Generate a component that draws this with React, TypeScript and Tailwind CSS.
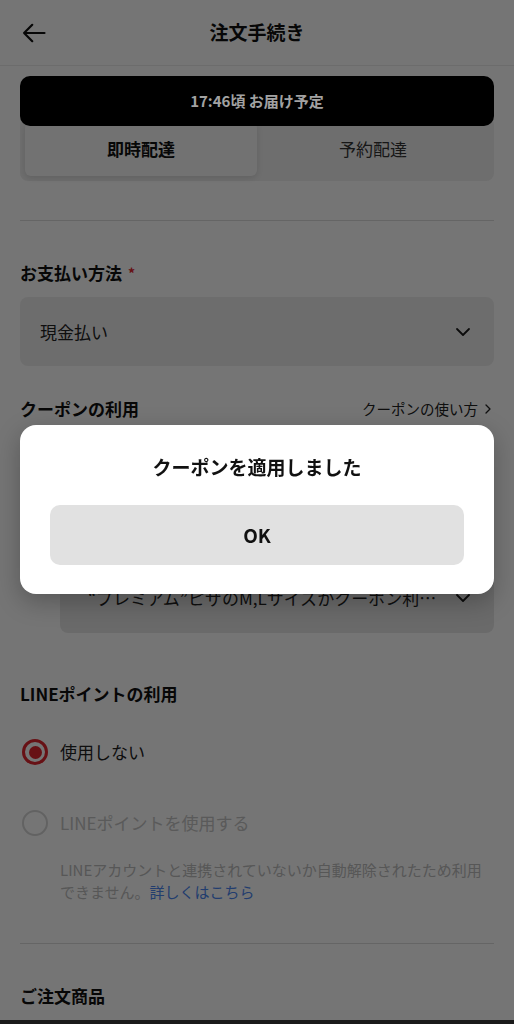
import React from 'react'

const FONT = { fontFamily: '"Noto Sans CJK JP", "Noto Sans", sans-serif' }

function ChevronDown() {
  return (
    <svg width="18" height="18" viewBox="0 0 24 24" fill="none" stroke="#1a1a1a" strokeWidth="2.4" strokeLinecap="round" strokeLinejoin="round">
      <path d="M4 8l8 8 8-8" />
    </svg>
  )
}

function Radio({ checked, disabled }: { checked?: boolean; disabled?: boolean }) {
  if (checked) {
    return (
      <span className="flex h-[26px] w-[26px] shrink-0 items-center justify-center rounded-full border-[3px] border-[#e0262f] bg-white">
        <span className="h-[13px] w-[13px] rounded-full bg-[#e0262f]" />
      </span>
    )
  }
  return (
    <span className={`h-[26px] w-[26px] shrink-0 rounded-full border-2 ${disabled ? 'border-[#d6d6d6]' : 'border-[#9a9a9a]'} bg-white`} />
  )
}

function SectionTitle({ children }: { children: React.ReactNode }) {
  return <p className="text-[17px] font-bold leading-6 text-[#111]">{children}</p>
}

export default function App() {
  return (
    <div className="relative min-h-[1024px] overflow-hidden bg-white text-[#111]" style={FONT}>
      {/* header */}
      <div className="flex h-[66px] items-center border-b border-[#ececec] px-[20px]">
        <svg width="28" height="28" viewBox="0 0 24 24" fill="none" stroke="#111" strokeWidth="1.9" strokeLinecap="round" strokeLinejoin="round">
          <path d="M21 12H3.5M10.5 5l-7 7 7 7" />
        </svg>
        <p className="flex-1 pr-[28px] text-center text-[19px] font-bold">注文手続き</p>
      </div>

      <div className="px-5">
        {/* delivery type */}
        <div className="mt-[51px] flex rounded-lg bg-[#efefef] p-[5px]">
          <div className="flex h-[54px] flex-1 items-center justify-center rounded-md bg-[#f9f9f9] text-[17px] font-bold shadow-[0_2px_6px_rgba(0,0,0,0.12)]">即時配達</div>
          <div className="flex h-[54px] flex-1 items-center justify-center text-[17px] text-[#333]">予約配達</div>
        </div>

        <div className="mt-[39px] border-t border-[#dcdcdc]" />

        {/* payment */}
        <div className="mt-10 flex items-center gap-1.5">
          <SectionTitle>お支払い方法</SectionTitle>
          <span className="text-[14px] font-bold text-[#e0262f]">*</span>
        </div>
        <div className="mt-3 flex h-[69px] items-center justify-between rounded-lg bg-[#eeeeee] pl-5 pr-[22px]">
          <span className="text-[17px] text-[#222]">現金払い</span>
          <ChevronDown />
        </div>

        {/* coupon */}
        <div className="mt-[31px] flex items-center justify-between">
          <SectionTitle>クーポンの利用</SectionTitle>
          <span className="flex items-center gap-1 text-[14.5px] text-[#222]">
            クーポンの使い方
            <svg width="12" height="12" viewBox="0 0 24 24" fill="none" stroke="#222" strokeWidth="2.6" strokeLinecap="round" strokeLinejoin="round">
              <path d="M8 4l8 8-8 8" />
            </svg>
          </span>
        </div>
        <div className="mt-[28px] flex h-[30px] items-center gap-[12px]">
          <Radio />
          <span className="text-[17px]">使用しない</span>
        </div>
        <div className="mt-[24px] flex h-[30px] items-center gap-[12px]">
          <Radio checked />
          <span className="text-[17px]">クーポンを使用する</span>
        </div>
        <div className="ml-10 mt-[30px] flex h-[70px] items-center justify-between rounded-lg bg-[#e8e8e8] pl-[28px] pr-[22px]">
          <span className="truncate text-[17px] text-[#222]">“プレミアム”ピザのM,Lサイズかクーポン利…</span>
          <ChevronDown />
        </div>

        {/* LINE points */}
        <div className="mt-[49px]">
          <SectionTitle>LINEポイントの利用</SectionTitle>
        </div>
        <div className="mt-[31px] flex h-[30px] items-center gap-[12px] pl-[2px]">
          <Radio checked />
          <span className="text-[17px] text-[#222]">使用しない</span>
        </div>
        <div className="mt-[41px] flex h-[30px] items-center gap-[12px] pl-[2px]">
          <Radio disabled />
          <span className="text-[17px] text-[#c4c4c4]">LINEポイントを使用する</span>
        </div>
        <p className="mt-[21px] pl-10 text-[15px] leading-[22px] text-[#bdbdbd]">
          LINEアカウントと連携されていないか自動解除されたため利用できません。<span className="text-[#4a86f0]">詳しくはこちら</span>
        </p>

        <div className="mt-[40px] border-t border-[#dcdcdc]" />

        <div className="mt-[40px]">
          <SectionTitle>ご注文商品</SectionTitle>
        </div>
      </div>
      <div className="mt-[12px] h-[40px] bg-[#3a3a3a]" />

      {/* dim overlay */}
      <div className="fixed inset-0 bg-black/[0.54]" />

      {/* delivery time banner */}
      <div className="absolute left-5 right-5 top-[76px] flex h-[50px] items-center justify-center rounded-[10px] bg-black text-[15px] font-bold text-[#a2a2a2]">
        17:46頃 お届け予定
      </div>

      {/* dialog */}
      <div className="fixed inset-0 px-5 pt-[425px]">
        <div className="rounded-[16px] bg-white px-[30px] pb-[29px] pt-[30px] shadow-[0_8px_24px_rgba(0,0,0,0.25)]">
          <p className="text-center text-[19px] font-bold leading-6">クーポンを適用しました</p>
          <div className="mt-[26px] flex h-[60px] items-center justify-center rounded-[10px] bg-[#e1e1e1] text-[19px] font-bold">OK</div>
        </div>
      </div>
    </div>
  )
}
